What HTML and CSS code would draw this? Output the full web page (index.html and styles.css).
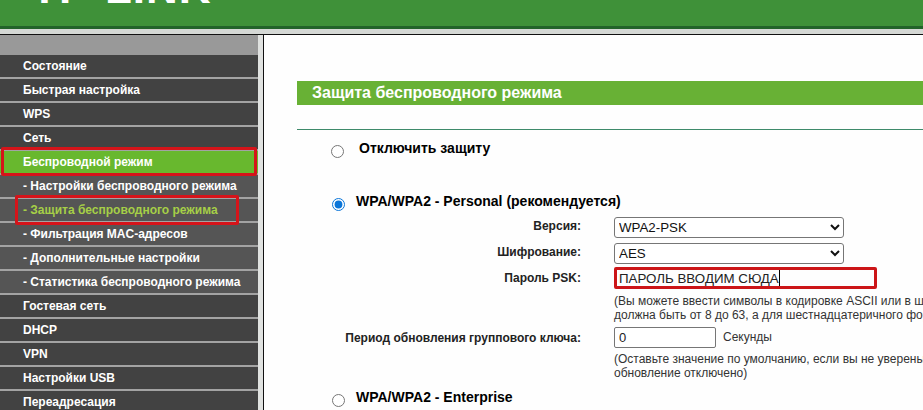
FILE: index.html
```html
<!DOCTYPE html>
<html lang="ru">
<head>
<meta charset="utf-8">
<title>Защита беспроводного режима</title>
<link rel="stylesheet" href="styles.css">
</head>
<body>
<header class="top">
  <div class="brand"><span class="logo">TP-LINK</span></div>
  <div class="top-dark"></div>
  <div class="top-gray"></div>
</header>
<div class="main">
  <nav class="side">
    <div class="side-head"></div>
    <a class="item">Состояние</a>
    <a class="item">Быстрая настройка</a>
    <a class="item">WPS</a>
    <a class="item">Сеть</a>
    <a class="item active">Беспроводной режим</a>
    <a class="item sub">- Настройки беспроводного режима</a>
    <a class="item sub current">- Защита беспроводного режима</a>
    <a class="item sub">- Фильтрация MAC-адресов</a>
    <a class="item sub">- Дополнительные настройки</a>
    <a class="item sub">- Статистика беспроводного режима</a>
    <a class="item">Гостевая сеть</a>
    <a class="item">DHCP</a>
    <a class="item">VPN</a>
    <a class="item">Настройки USB</a>
    <a class="item">Переадресация</a>
  </nav>
  <div class="side-edge"></div>
  <main class="content">
    <h1 class="title">Защита беспроводного режима</h1>
    <hr class="rule">
    <label class="mode mode-off"><input type="radio" name="sec" class="radio"><span>Отключить защиту</span></label>
    <label class="mode mode-personal"><input type="radio" name="sec" class="radio" checked><span>WPA/WPA2 - Personal (рекомендуется)</span></label>
    <div class="form">
      <div class="lbl lbl-top">Версия:</div>
      <select class="sel sel-first"><option>WPA2-PSK</option></select>
      <div class="lbl lbl-top">Шифрование:</div>
      <select class="sel sel-second"><option>AES</option></select>
      <div class="lbl">Пароль PSK:</div>
      <div class="psk">ПАРОЛЬ ВВОДИМ СЮДА<span class="caret"></span></div>
      <div></div>
      <div class="note note-first">(Вы можете ввести символы в кодировке ASCII или в шестнадцатеричном формате. Длина<br>должна быть от 8 до 63, а для шестнадцатеричного формата — 64)</div>
      <div class="lbl lbl-period">Период обновления группового ключа:</div>
      <div class="period"><input class="num" type="text" value="0"><span class="unit">Секунды</span></div>
      <div></div>
      <div class="note note-second">(Оставьте значение по умолчанию, если вы не уверены. Значение 0 означает, что<br>обновление отключено)</div>
    </div>
    <label class="mode mode-ent"><input type="radio" name="sec" class="radio"><span>WPA/WPA2 - Enterprise</span></label>
  </main>
</div>
<div class="mark mark-wireless"></div>
<div class="mark mark-security"></div>
</body>
</html>
```
FILE: styles.css
```css
html, body { margin: 0; padding: 0; }
body {
  width: 923px;
  height: 410px;
  overflow: hidden;
  background: #fefefe;
  font-family: "Liberation Sans", Arial, sans-serif;
  position: relative;
}
.top { height: 35px; overflow: hidden; }
.brand { height: 26px; background: #3f9139; position: relative; overflow: hidden; }
.logo {
  position: absolute;
  left: 31px;
  top: -34.5px;
  font-size: 44px;
  line-height: 44px;
  font-weight: 700;
  color: #fff;
  letter-spacing: 1px;
}
.top-dark { height: 3px; background: #22632a; }
.top-gray { height: 5px; background: #d5d8d5; border-bottom: 1px solid #111; }
.main { display: flex; height: 375px; }
.side { width: 258px; background: #a3a3a3; flex: none; }
.side-head { height: 20px; background: #999; }
.item {
  display: block;
  height: 22px;
  line-height: 22px;
  margin-bottom: 2px;
  padding-left: 23px;
  background: #424242;
  color: #fff;
  font-size: 12px;
  font-weight: 700;
  white-space: nowrap;
}
.item.active { background: #68b82e; }
.item.sub { background: #555; }
.item.current { color: #a6cf47; }
.side-edge { width: 5px; flex: none; background: #e0e2e0; border-right: 1px solid #111; }
.content { flex: 1; min-width: 0; padding-left: 33px; overflow: hidden; }
.title {
  margin: 46px 0 0;
  height: 24px;
  line-height: 24px;
  width: 627px;
  padding-left: 15px;
  background: #68b135;
  color: #fff;
  font-size: 16px;
  font-weight: 700;
}
.rule { margin: 24px 0 0; border: 0; height: 1px; background: #3e8a6a; }
.mode { display: flex; color: #000; font-size: 14px; line-height: 16px; font-weight: 700; white-space: nowrap; }
.mode span { position: relative; top: -5px; }
.radio { margin: 0; width: 13px; height: 13px; flex: none; accent-color: #0a75d8; }
.mode-off { margin: 15px 0 0 34px; gap: 15px; }
.mode-personal { margin: 37px 0 0 35px; gap: 11px; }
.form {
  display: grid;
  grid-template-columns: 284px auto;
  column-gap: 33px;
  justify-items: start;
  align-items: center;
  margin-top: 3px;
  width: 650px;
}
.lbl { justify-self: end; font-size: 12px; font-weight: 700; color: #222; white-space: nowrap; }
.lbl-top { align-self: start; line-height: 18px; }
.lbl-period { margin-top: 5px; }
.sel {
  width: 230px;
  height: 21px;
  font: 13.33px "Liberation Sans", Arial, sans-serif;
  color: #111;
  background: #fff;
  border: 1px solid #767676;
  border-radius: 3px;
  box-sizing: border-box;
}
.sel-first { margin-bottom: 5px; }
.sel-second { margin-bottom: 3px; }
.psk {
  width: 263px;
  height: 22px;
  line-height: 16px;
  box-sizing: border-box;
  border: 3px solid #cc1518;
  border-radius: 2px;
  padding-left: 2px;
  font-size: 13.33px;
  color: #222;
  white-space: nowrap;
}
.caret { display: inline-block; width: 1px; height: 16px; background: #000; vertical-align: -3px; }
.note { font-size: 12px; line-height: 14px; color: #333; white-space: nowrap; }
.note-first { margin-top: 5px; }
.note-second { margin-top: 4px; }
.period { display: flex; align-items: center; gap: 7px; font-size: 12px; color: #333; margin-top: 5px; }
.unit { padding-bottom: 2px; }
.num {
  width: 102px;
  height: 21px;
  box-sizing: border-box;
  padding: 0 4px;
  border: 1px solid #767676;
  border-radius: 2px;
  font: 13px "Liberation Sans", Arial, sans-serif;
  color: #222;
}
.mode-ent { margin: 14px 0 0 35px; gap: 11px; }
.mark { position: absolute; box-sizing: border-box; border: 3px solid #d5141a; border-radius: 2px; }
.mark-wireless { left: 1px; top: 147px; width: 256px; height: 29px; }
.mark-security { left: 15px; top: 195px; width: 224px; height: 30px; }
```
